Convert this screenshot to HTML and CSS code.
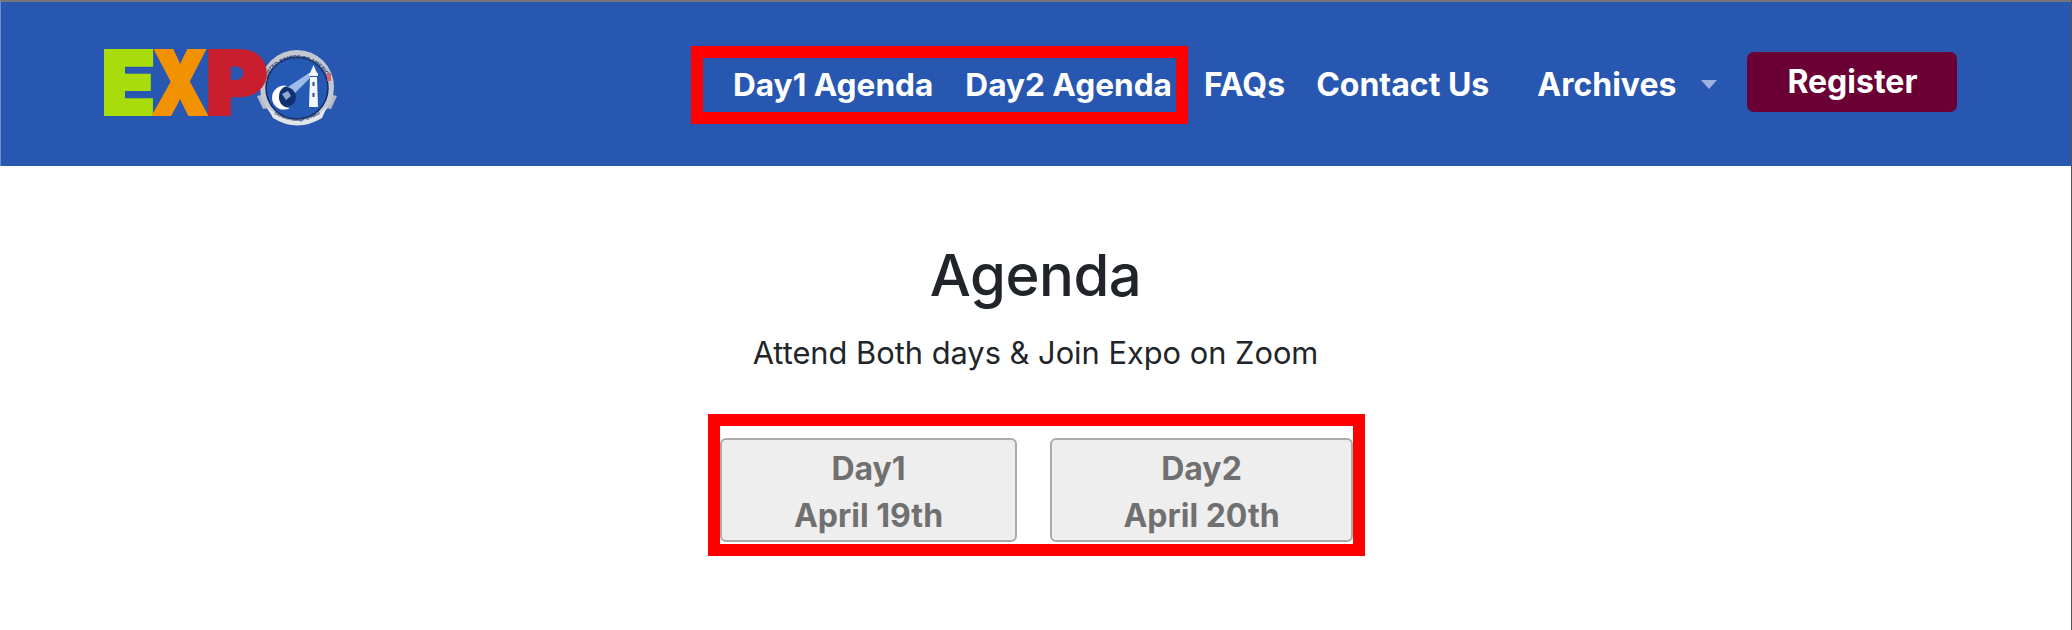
FILE: index.html
```html
<!DOCTYPE html>
<html lang="en">
<head>
    <meta charset="UTF-8">
    <title>Expo Agenda</title>
    <link rel="stylesheet" href="styles.css">
</head>
<body>
    <header class="topbar">
        <a class="logo" href="#">
            <span class="logo-word"><span class="logo-e">E</span><span class="logo-x">X</span><span class="logo-p">P</span></span>
            <svg class="logo-seal" width="90" height="85" viewBox="0 0 90 85">
                <defs>
                    <path id="seal-top" d="M8 46 A34 34 0 0 1 76 46"/>
                    <path id="seal-bottom" d="M14 62 Q42 84 70 62"/>
                </defs>
                <path d="M2 49 L13 46 L19 60 L8 62 Z" fill="#b4bac6"/>
                <path d="M82 49 L71 46 L65 60 L76 62 Z" fill="#b4bac6"/>
                <circle cx="42" cy="40" r="37" fill="#c3c8d2"/>
                <circle cx="42" cy="41" r="31" fill="#2459b4" stroke="#10286a" stroke-width="1.5"/>
                <text class="seal-text" font-size="5.4"><textPath href="#seal-top" startOffset="50%" text-anchor="middle">UNITED STATES OF AMERICA</textPath></text>
                <path d="M12 60 Q42 88 72 60 L67 71 Q42 86 18 71 Z" fill="#e2e5ea"/>
                <text class="seal-text" font-size="4.6" dy="1"><textPath href="#seal-bottom" startOffset="50%" text-anchor="middle">TAHRIK WAQF-E-NAU</textPath></text>
                <rect x="8" y="26" width="4" height="8" fill="#d8606a"/>
                <rect x="72" y="26" width="4" height="8" fill="#d8606a"/>
                <path d="M30 42 L54 26 L55 31 L36 50 Z" fill="#9dbbe8"/>
                <circle cx="31" cy="50" r="10" fill="#10306f"/>
                <path d="M32 39 A12 12 0 1 0 35 61 A10.500 10.500 0 0 1 24 50 A10 10 0 0 1 32 39 Z" fill="#fff"/>
                <path d="M27 47 L33 44 L36 49 L31 53 Z" fill="#8fa8d4"/>
                <path d="M54 60 L55 30 L62 30 L63 60 Z" fill="#f4f6fa"/>
                <rect x="54" y="26" width="9" height="3" fill="#f4f6fa"/>
                <path d="M55 26 L58.500 18 L62 26 Z" fill="#f4f6fa"/>
                <rect x="57.500" y="35" width="2" height="4" fill="#2b4f96"/>
                <rect x="57.500" y="46" width="2" height="4" fill="#2b4f96"/>
            </svg>
        </a>
        <nav class="nav">
            <div class="nav-box">
                <a class="nav-link" href="#">Day1 Agenda</a>
                <a class="nav-link" href="#">Day2 Agenda</a>
            </div>
            <a class="nav-link faq" href="#">FAQs</a>
            <a class="nav-link contact" href="#">Contact Us</a>
            <a class="nav-link archives" href="#">Archives<span class="caret"></span></a>
            <a class="register" href="#">Register</a>
        </nav>
    </header>

    <main class="agenda">
        <h1>Agenda</h1>
        <p>Attend Both days &amp; Join Expo on Zoom</p>
        <div class="day-box">
            <button class="day-btn day-one">Day1<br>April 19th</button>
            <button class="day-btn day-two">Day2<br>April 20th</button>
        </div>
    </main>
</body>
</html>
```

FILE: styles.css
```css
body {
    margin: 0;
    height: 630px;
    overflow: hidden;
    font-family: Inter, "Liberation Sans", sans-serif;
    background-color: #fff;
    color: #212529;
    border-right: 1px solid #555;
    box-sizing: border-box;
}

a {
    color: #fff;
    text-decoration: none;
}

/* top bar */
.topbar {
    display: flex;
    align-items: flex-start;
    height: 164px;
    background-color: #2757b0;
    border-top: 2px solid #777;
    border-left: 1px solid #6f8cc4;
    margin-right: -1px;
}
.logo {
    display: flex;
    flex: none;
    width: 589px;
    margin: 48px 0 0 101px;
}
.logo-word {
    display: flex;
    width: 153px;
    height: 67px;
    font-size: 86px;
    font-weight: 900;
    line-height: 67px;
}
.logo-word span {
    transform-origin: left center;
}
.logo-e {
    width: 51px;
    color: #a8dc0a;
    -webkit-text-stroke: 4px #a8dc0a;
}
.logo-x {
    width: 53px;
    color: #f39200;
    -webkit-text-stroke: 4px #f39200;
    transform: scaleX(0.8);
}
.logo-p {
    width: 49px;
    color: #c81e2d;
    -webkit-text-stroke: 4px #c81e2d;
    transform: scaleX(1.08);
}
.logo-seal {
    flex: none;
    margin-top: -3px;
}
.seal-text {
    font-family: "Liberation Sans", sans-serif;
    font-weight: 700;
    fill: #28406f;
}

.nav {
    display: flex;
    align-items: center;
    margin-top: 44px;
    font-size: 32px;
    font-weight: 700;
}
.nav-box {
    display: flex;
    gap: 32px;
    height: 54px;
    align-items: center;
    padding: 0 4px 0 30px;
    border: 12px solid #f00;
    font-size: 31.600px;
}
.nav-link {
    line-height: 1;
    margin-bottom: 1px;
}
.faq {
    margin-left: 16px;
}
.contact {
    margin-left: 31px;
}
.archives {
    display: flex;
    align-items: center;
    margin-left: 48px;
}
.caret {
    margin-left: 25px;
    border-left: 8.500px solid transparent;
    border-right: 8.500px solid transparent;
    border-top: 9px solid #9fb3e0;
}
.register {
    width: 210px;
    margin: 0 0 6px 30px;
    line-height: 60px;
    text-align: center;
    background-color: #6b0035;
    border-radius: 7px;
}

/* content */
.agenda {
    display: flex;
    flex-direction: column;
    align-items: center;
    text-align: center;
}
.agenda h1 {
    margin: 73px 0 0;
    font-size: 58px;
    font-weight: 500;
    line-height: 72px;
    letter-spacing: -0.5px;
}
.agenda p {
    margin: 19px 0 0;
    font-size: 30.800px;
    line-height: 45px;
}
.day-box {
    display: flex;
    gap: 33px;
    margin: 39px 0 0 2px;
    padding: 12px 0 2px;
    border: 12px solid #f00;
}
.day-btn {
    height: 104px;
    padding: 4px 0 0;
    font-family: inherit;
    font-size: 32px;
    font-weight: 700;
    line-height: 47px;
    color: #707070;
    background-color: #eee;
    border: 2px solid #aaa;
    border-radius: 6px;
}
.day-one {
    width: 297px;
}
.day-two {
    width: 303px;
}
```
